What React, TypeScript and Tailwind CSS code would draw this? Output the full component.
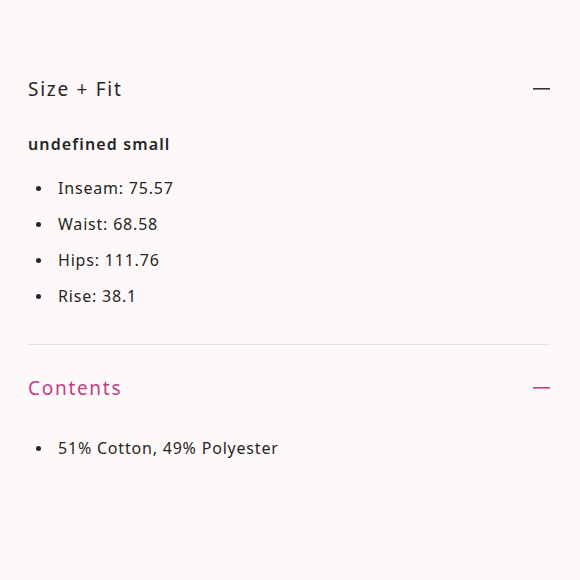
import React from "react";

function Minus({ color }: { color: string }) {
  return (
    <svg width="17" height="2" viewBox="0 0 17 2" className="block">
      <rect x="0" y="0" width="17" height="1.6" fill={color} />
    </svg>
  );
}

function Bullet({ children }: { children: React.ReactNode }) {
  return (
    <li className="flex items-center h-[36px]">
      <span className="w-[5px] h-[5px] rounded-full bg-[#262626] ml-[8px] mr-[17px]" />
      <span>{children}</span>
    </li>
  );
}

export default function App() {
  return (
    <div
      className="w-[580px] h-[580px] bg-[#fdf9f8] text-[#262626] overflow-hidden"
      style={{ fontFamily: '"Noto Sans", "Open Sans", sans-serif' }}
    >
      <div className="pl-[28px] pr-[30px] pt-[72px]">
        <div className="flex items-center justify-between h-[34px]">
          <span className="text-[19px] tracking-[0.09em] leading-none">Size + Fit</span>
          <Minus color="#333" />
        </div>
        <div className="mt-[30px] text-[16px] font-semibold tracking-[0.07em] leading-none">undefined small</div>
        <ul className="mt-[18px] text-[16px] tracking-[0.05em]">
          <Bullet>Inseam: 75.57</Bullet>
          <Bullet>Waist: 68.58</Bullet>
          <Bullet>Hips: 111.76</Bullet>
          <Bullet>Rise: 38.1</Bullet>
        </ul>
        <div className="mt-[30px] h-px bg-[#e6e2e1]" />
        <div className="flex items-center justify-between h-[34px] mt-[26px]">
          <span className="text-[19px] tracking-[0.09em] leading-none text-[#c33d85]">Contents</span>
          <Minus color="#c33d85" />
        </div>
        <ul className="mt-[25px] text-[16px] tracking-[0.05em]">
          <Bullet>51% Cotton, 49% Polyester</Bullet>
        </ul>
      </div>
    </div>
  );
}
